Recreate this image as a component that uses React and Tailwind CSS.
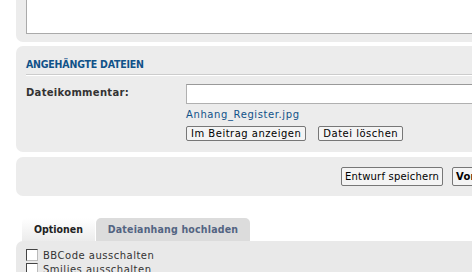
import React from "react";

const Checkbox = ({ label }) => (
  <label className="flex items-center gap-[5px] h-[14px]">
    <span className="w-[12px] h-[12px] shrink-0 bg-white border border-[#444] border-r-[#bbb] border-b-[#bbb]" />
    <span className="text-[10px] text-[#333] tracking-[0.5px] whitespace-nowrap">{label}</span>
  </label>
);

const Button = ({ children, bold, tall }) => (
  <button
    className={`shrink-0 whitespace-nowrap bg-[#f4f4f4] border border-[#777] rounded-[2px] text-[10px] text-black ${
      tall ? "h-[19px] px-[3px] tracking-[0.2px]" : "leading-[13px] px-[4px] tracking-[0.5px]"
    } ${bold ? "font-bold" : ""}`}
  >
    {children}
  </button>
);

const condensed = { fontFamily: '"DejaVu Sans Condensed", "DejaVu Sans", sans-serif' };

export default function App() {
  return (
    <div
      className="w-[472px] h-[272px] overflow-hidden bg-white"
      style={{ fontFamily: '"DejaVu Sans", Verdana, sans-serif' }}
    >
      <div className="ml-[16px] w-[560px]">
        {/* message panel */}
        <div className="-mt-[18px] pt-[8px] pb-[8px] px-[10px] bg-[#ececec] rounded-b-[7px]">
          <div className="h-[44px] bg-white border border-[#aaa]" />
        </div>

        {/* attachments */}
        <div className="mt-[4px] bg-[#ececec] rounded-[7px] px-[10px] pt-[10px] pb-[11px]">
          <div className="h-[19px] border-b border-[#cccccc] shadow-[0_1px_0_#ffffff]">
            <h3
              className="text-[10.5px] leading-[16px] font-bold text-[#105289] tracking-[-0.2px]"
              style={condensed}
            >
              ANGEHÄNGTE DATEIEN
            </h3>
          </div>
          <div className="flex mt-[9px]">
            <div className="w-[160px] text-[10px] font-bold text-[#333] leading-[16px] pt-[1px] tracking-[0.3px]">
              Dateikommentar:
            </div>
            <div className="flex-1">
              <div className="h-[20px] bg-white border border-[#b0b0b0] border-t-[#999]" />
              <a className="block mt-[3px] text-[10px] leading-[15px] text-[#105289] tracking-[0.6px]">
                Anhang_Register.jpg
              </a>
              <div className="flex gap-[12px] mt-[4px]">
                <Button>Im Beitrag anzeigen</Button>
                <Button>Datei löschen</Button>
              </div>
            </div>
          </div>
        </div>

        {/* submit buttons */}
        <div className="mt-[5px] bg-[#ececec] rounded-[7px] h-[39px] flex items-center pl-[325px] gap-[9px]">
          <Button tall>Entwurf speichern</Button>
          <Button tall bold>Vorschau</Button>
          <Button tall bold>Absenden</Button>
        </div>

        {/* tabs */}
        <div className="mt-[22px] flex pl-[6px] gap-[1px]">
          <div
            className="w-[73px] h-[23px] flex items-center justify-center rounded-t-[5px] bg-gradient-to-b from-[#ffffff] to-[#ececec] text-[10.5px] font-bold text-[#222]"
            style={condensed}
          >
            Optionen
          </div>
          <div
            className="w-[154px] h-[23px] flex items-center justify-center rounded-t-[5px] bg-[#dcdcdc] text-[10.5px] font-bold text-[#536482] tracking-[0.2px]"
            style={condensed}
          >
            Dateianhang hochladen
          </div>
        </div>
        <div className="bg-[#e9e9e9] rounded-tl-[7px] px-[10px] pt-[7px] flex flex-col h-[40px]">
          <Checkbox label="BBCode ausschalten" />
          <Checkbox label="Smilies ausschalten" />
        </div>
      </div>
    </div>
  );
}
